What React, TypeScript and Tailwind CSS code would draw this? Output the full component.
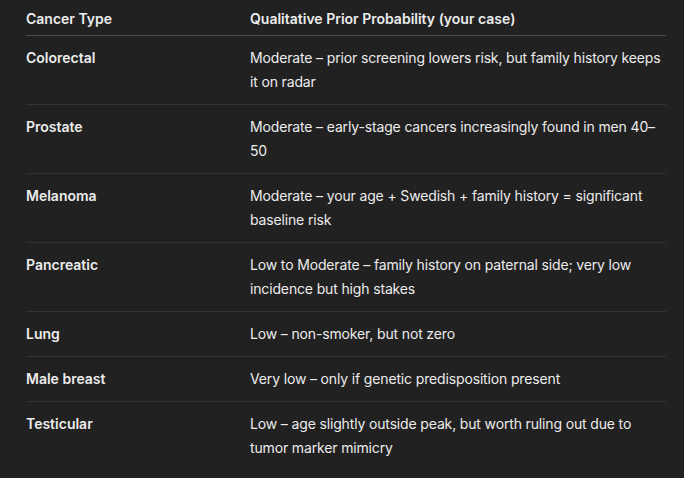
import React from 'react';

const rows: [string, string][] = [
  ['Colorectal', 'Moderate – prior screening lowers risk, but family history keeps it on radar'],
  ['Prostate', 'Moderate – early-stage cancers increasingly found in men 40–50'],
  ['Melanoma', 'Moderate – your age + Swedish + family history = significant baseline risk'],
  ['Pancreatic', 'Low to Moderate – family history on paternal side; very low incidence but high stakes'],
  ['Lung', 'Low – non-smoker, but not zero'],
  ['Male breast', 'Very low – only if genetic predisposition present'],
  ['Testicular', 'Low – age slightly outside peak, but worth ruling out due to tumor marker mimicry'],
];

export default function App() {
  return (
    <div className="min-h-screen w-full bg-[#212121] text-[#ececec] font-['Inter','Liberation_Sans',sans-serif] text-[14px] leading-[24px]">
      <table className="ml-[26px] w-[640px] border-collapse table-fixed">
        <thead>
          <tr className="border-b border-[#4a4a4a]">
            <th className="w-[224px] pt-[7px] pb-[4px] text-left font-semibold">Cancer Type</th>
            <th className="pt-[7px] pb-[4px] text-left font-semibold">Qualitative Prior Probability (your case)</th>
          </tr>
        </thead>
        <tbody>
          {rows.map(([type, prob], i) => (
            <tr key={type} className={i < rows.length - 1 ? 'border-b border-[#333333]' : ''}>
              <td className="py-[10px] align-top font-semibold">{type}</td>
              <td className="py-[10px] pr-[4px] align-top tracking-[-0.15px]">{prob}</td>
            </tr>
          ))}
        </tbody>
      </table>
    </div>
  );
}
